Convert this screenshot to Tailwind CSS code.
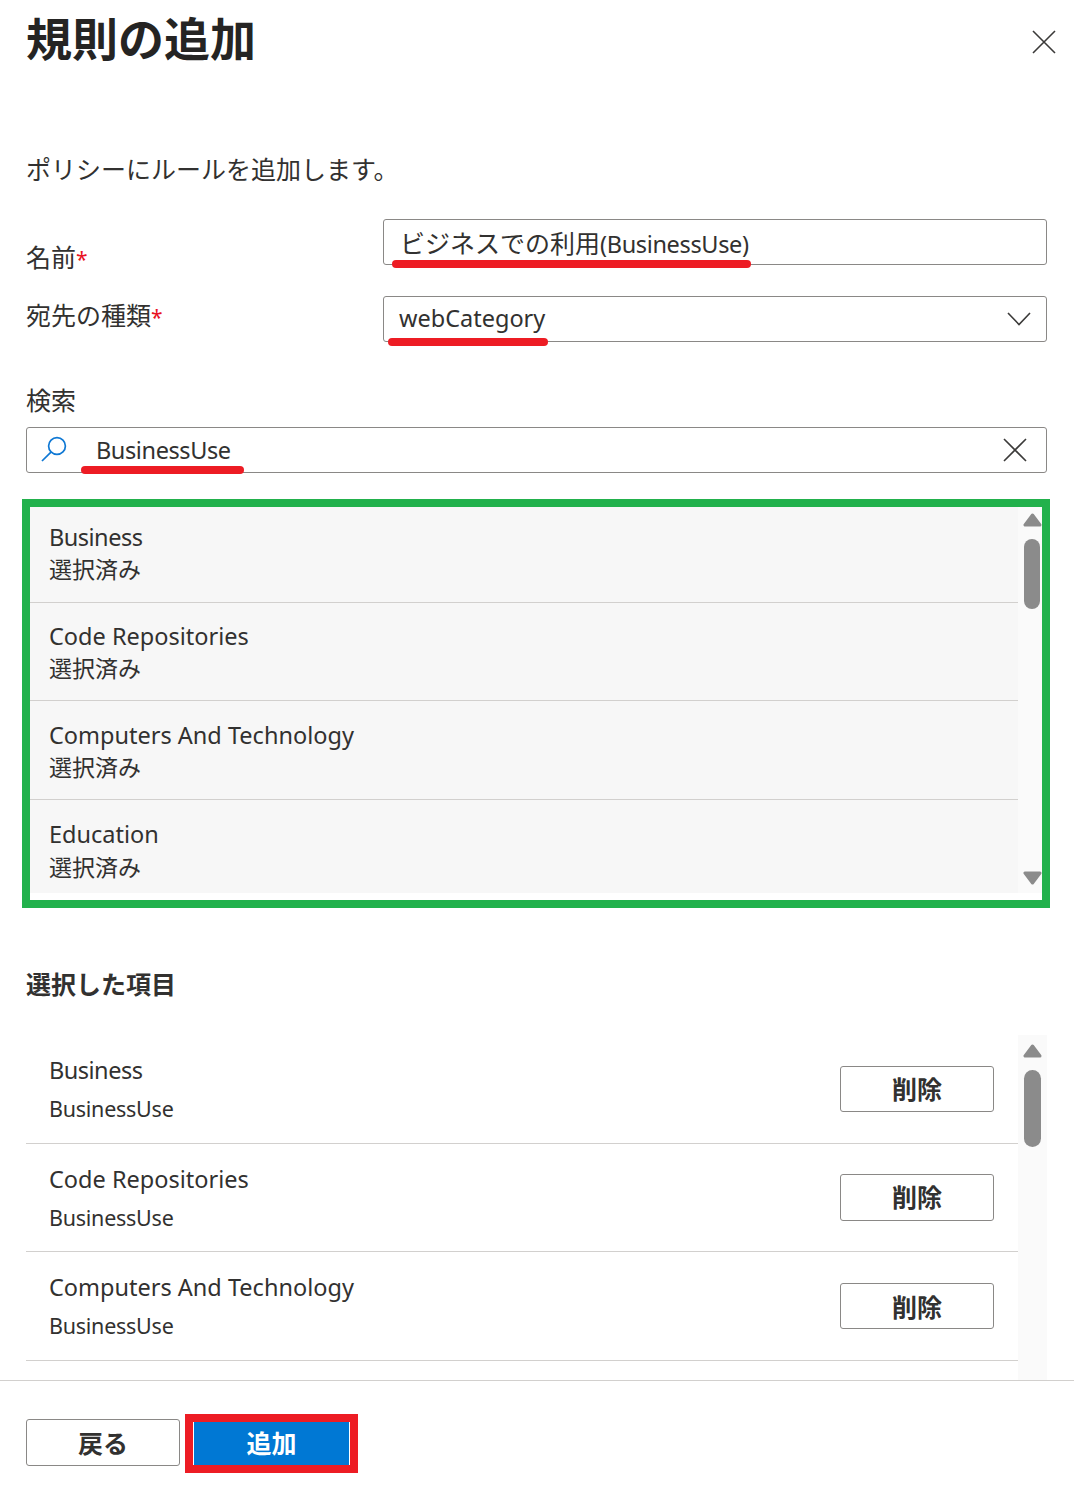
<!DOCTYPE html>
<html lang="ja">
<head>
<meta charset="utf-8">
<script src="https://cdn.jsdelivr.net/npm/@tailwindcss/browser@4"></script>
</head>
<body class="bg-white">
<div class="w-[1074px] h-[1485px] flex flex-col overflow-hidden text-[#323130] text-[25px] font-['Noto_Sans','Noto_Sans_CJK_JP',sans-serif]">
  <main class="h-[1380px] shrink-0 overflow-hidden pl-[26px] pr-[27px]">
    <header class="h-[80px] flex justify-between items-center">
      <h1 class="text-[46px] leading-[76px] h-[80px] font-bold text-[#252423]">規則の追加</h1>
      <svg class="w-[24px] h-[24px] mr-[-9px] mt-[3px]" viewBox="0 0 24 24" fill="none" stroke="#3b3a39" stroke-width="1.6"><path d="M1 1 23 23M23 1 1 23"/></svg>
    </header>
    <p class="mt-[70px] leading-[38px] h-[40px]">ポリシーにルールを追加します。</p>

    <div class="mt-[29px] grid grid-cols-[357px_664px]">
      <label class="h-[46px] pt-[18px] leading-[40px]">名前<span class="text-[#e81123] text-[21px]">*</span></label>
      <div class="relative h-[46px] border border-[#8a8886] rounded-[3px] pl-[16px] leading-[46px]">ビジネスでの利用<span class="text-[23.5px] tracking-[-0.35px]">(BusinessUse)</span>
        <div class="absolute left-[8px] top-[40px] w-[359px] h-[8px] rounded-[4px] bg-[#ed1c24]"></div>
      </div>
    </div>
    <div class="mt-[31px] grid grid-cols-[357px_664px]">
      <label class="leading-[38px] h-[40px]">宛先の種類<span class="text-[#e81123] text-[21px]">*</span></label>
      <div class="relative h-[46px] border border-[#8a8886] rounded-[3px] pl-[15px] pr-[15px] flex items-center justify-between">
        <span class="text-[23.5px]">webCategory</span>
        <svg class="w-[24px] h-[14px]" viewBox="0 0 24 14" fill="none" stroke="#3b3a39" stroke-width="1.6"><path d="M1 1 12 12.5 23 1"/></svg>
        <div class="absolute left-[4px] top-[41px] w-[160px] h-[8px] rounded-[4px] bg-[#ed1c24]"></div>
      </div>
    </div>

    <p class="mt-[39px] leading-[38px] h-[40px]">検索</p>
    <div class="relative mt-[6px] h-[46px] border border-[#8a8886] rounded-[3px] pl-[14px] pr-[19px] flex items-center justify-between">
      <div class="flex items-center gap-[29px]">
        <svg class="w-[26px] h-[26px] mt-[-2px]" viewBox="0 0 26 26" fill="none" stroke="#0f78d4" stroke-width="1.7"><circle cx="16" cy="10" r="8.4"/><path d="M10 16.2 1 25"/></svg>
        <span class="leading-[48px] text-[23.5px] tracking-[-0.4px]">BusinessUse</span>
      </div>
      <svg class="w-[24px] h-[24px]" viewBox="0 0 24 24" fill="none" stroke="#3b3a39" stroke-width="1.6"><path d="M1 1 23 23M23 1 1 23"/></svg>
      <div class="absolute left-[54px] top-[38px] w-[163px] h-[8px] rounded-[4px] bg-[#ed1c24]"></div>
    </div>

    <section class="mt-[26px] ml-[-4px] w-[1028px] h-[409px] border-[8px] border-[#22b14c]">
      <div class="h-[386px] flex overflow-hidden">
        <ul class="w-[988px] bg-[#f7f7f7]">
          <li class="h-[96px] pt-[10px] pl-[19px] border-b border-[#d2d0ce]">
            <p class="leading-[40px] h-[33px] text-[23.5px] tracking-[-0.5px]">Business</p><p class="leading-[38px] h-[40px] text-[23px]">選択済み</p>
          </li>
          <li class="h-[98.4px] pl-[19px] pt-[13px] border-b border-[#d2d0ce]">
            <p class="leading-[40px] h-[33px] text-[23.5px]">Code Repositories</p><p class="leading-[38px] h-[40px] text-[23px]">選択済み</p>
          </li>
          <li class="h-[98.8px] pl-[19px] pt-[14px] border-b border-[#d2d0ce]">
            <p class="leading-[40px] h-[33px] text-[23.5px]">Computers And Technology</p><p class="leading-[38px] h-[40px] text-[23px]">選択済み</p>
          </li>
          <li class="h-[98.6px] pl-[19px] pt-[14px]">
            <p class="leading-[40px] h-[33px] text-[23.5px]">Education</p><p class="leading-[40px] text-[23px]">選択済み</p>
          </li>
        </ul>
        <div class="w-[24px] bg-[#fafafa] flex flex-col items-center pl-[5px]">
          <svg class="mt-[6px] w-[19px] h-[14px] shrink-0" viewBox="0 0 19 14" fill="#8b8b8b" stroke="#8b8b8b" stroke-width="3" stroke-linejoin="round"><path d="M9.5 2 2 12H17Z"/></svg>
          <div class="mt-[12px] ml-[-1px] w-[16px] h-[70px] shrink-0 rounded-[8px] bg-[#8b8b8b]"></div>
          <svg class="mt-[262px] w-[19px] h-[14px] shrink-0" viewBox="0 0 19 14" fill="#8b8b8b" stroke="#8b8b8b" stroke-width="3" stroke-linejoin="round"><path d="M2 2H17L9.5 12Z"/></svg>
        </div>
      </div>
    </section>

    <h2 class="mt-[57px] leading-[38px] h-[40px] font-bold">選択した項目</h2>

    <div class="mt-[30px] flex h-[345px] overflow-hidden">
      <ul class="w-[992px]">
        <li class="h-[108.67px] pl-[23px] pr-[24px] flex justify-between border-b border-[#d2d0ce]">
          <div class="pt-[15px]"><p class="leading-[40px] text-[23.5px] tracking-[-0.5px]">Business</p><p class="text-[21.5px] tracking-[-0.25px] leading-[40px] mt-[-1px]">BusinessUse</p></div>
          <button class="mt-[31px] pt-[2px] w-[154px] h-[46px] border border-[#8a8886] rounded-[3px] font-bold">削除</button>
        </li>
        <li class="h-[108.67px] pl-[23px] pr-[24px] flex justify-between border-b border-[#d2d0ce]">
          <div class="pt-[15px]"><p class="leading-[40px] text-[23.5px]">Code Repositories</p><p class="text-[21.5px] tracking-[-0.25px] leading-[40px] mt-[-1px]">BusinessUse</p></div>
          <button class="mt-[30px] pt-[2px] w-[154px] h-[47px] border border-[#8a8886] rounded-[3px] font-bold">削除</button>
        </li>
        <li class="h-[108.67px] pl-[23px] pr-[24px] flex justify-between border-b border-[#d2d0ce]">
          <div class="pt-[15px]"><p class="leading-[40px] text-[23.5px]">Computers And Technology</p><p class="text-[21.5px] tracking-[-0.25px] leading-[40px] mt-[-1px]">BusinessUse</p></div>
          <button class="mt-[31px] pt-[2px] w-[154px] h-[46px] border border-[#8a8886] rounded-[3px] font-bold">削除</button>
        </li>
      </ul>
      <div class="w-[29px] bg-[#fafafa] flex flex-col pl-[5px]">
        <svg class="mt-[9px] w-[19px] h-[14px] shrink-0" viewBox="0 0 19 14" fill="#8b8b8b" stroke="#8b8b8b" stroke-width="3" stroke-linejoin="round"><path d="M9.5 2 2 12H17Z"/></svg>
        <div class="mt-[12px] ml-[1px] w-[17px] h-[77px] shrink-0 rounded-[8.5px] bg-[#8b8b8b]"></div>
      </div>
    </div>
  </main>

  <footer class="flex-1 border-t border-[#d2d0ce] pl-[26px] pt-[33px] flex items-start">
    <button class="mt-[5px] pt-[2px] w-[154px] h-[47px] border border-[#8a8886] rounded-[3px] font-bold">戻る</button>
    <div class="ml-[5px] w-[173px] h-[59px] border-[8px] border-[#ed1c24] bg-white">
      <button class="mx-[1px] w-[155px] h-[43px] bg-[#0078d4] text-white font-bold">追加</button>
    </div>
  </footer>
</div>
</body>
</html>
